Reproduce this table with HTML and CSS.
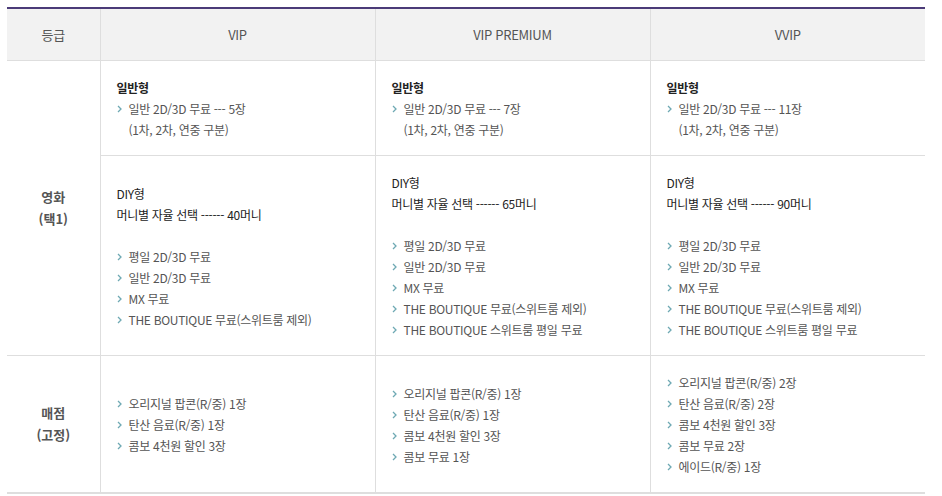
FILE: index.html
```html
<!DOCTYPE html>
<html lang="ko">
<head>
<meta charset="utf-8">
<title>등급별 혜택</title>
<link rel="stylesheet" href="styles.css">
</head>
<body>
<div class="wrap">
<table class="grade">
  <colgroup>
    <col class="c-label">
    <col class="c-tier">
    <col class="c-tier">
    <col class="c-tier">
  </colgroup>
  <thead>
    <tr>
      <th>등급</th>
      <th>VIP</th>
      <th>VIP PREMIUM</th>
      <th>VVIP</th>
    </tr>
  </thead>
  <tbody>
    <tr>
      <th class="row-label" rowspan="2">영화<br>(택1)</th>
      <td>
        <p class="sub strong">일반형</p>
        <ul class="list">
          <li><svg class="chev" viewBox="0 0 5 8"><path d="M1 1 L4 4 L1 7"/></svg><span>일반 2D/3D 무료 --- 5장<br>(1차, 2차, 연중 구분)</span></li>
        </ul>
      </td>
      <td>
        <p class="sub strong">일반형</p>
        <ul class="list">
          <li><svg class="chev" viewBox="0 0 5 8"><path d="M1 1 L4 4 L1 7"/></svg><span>일반 2D/3D 무료 --- 7장<br>(1차, 2차, 연중 구분)</span></li>
        </ul>
      </td>
      <td>
        <p class="sub strong">일반형</p>
        <ul class="list">
          <li><svg class="chev" viewBox="0 0 5 8"><path d="M1 1 L4 4 L1 7"/></svg><span>일반 2D/3D 무료 --- 11장<br>(1차, 2차, 연중 구분)</span></li>
        </ul>
      </td>
    </tr>
    <tr>
      <td>
        <p class="sub">DIY형</p>
        <p class="sub">머니별 자율 선택 ------ 40머니</p>
        <ul class="list gap">
          <li><svg class="chev" viewBox="0 0 5 8"><path d="M1 1 L4 4 L1 7"/></svg><span>평일 2D/3D 무료</span></li>
          <li><svg class="chev" viewBox="0 0 5 8"><path d="M1 1 L4 4 L1 7"/></svg><span>일반 2D/3D 무료</span></li>
          <li><svg class="chev" viewBox="0 0 5 8"><path d="M1 1 L4 4 L1 7"/></svg><span>MX 무료</span></li>
          <li><svg class="chev" viewBox="0 0 5 8"><path d="M1 1 L4 4 L1 7"/></svg><span>THE BOUTIQUE 무료(스위트룸 제외)</span></li>
        </ul>
      </td>
      <td>
        <p class="sub">DIY형</p>
        <p class="sub">머니별 자율 선택 ------ 65머니</p>
        <ul class="list gap">
          <li><svg class="chev" viewBox="0 0 5 8"><path d="M1 1 L4 4 L1 7"/></svg><span>평일 2D/3D 무료</span></li>
          <li><svg class="chev" viewBox="0 0 5 8"><path d="M1 1 L4 4 L1 7"/></svg><span>일반 2D/3D 무료</span></li>
          <li><svg class="chev" viewBox="0 0 5 8"><path d="M1 1 L4 4 L1 7"/></svg><span>MX 무료</span></li>
          <li><svg class="chev" viewBox="0 0 5 8"><path d="M1 1 L4 4 L1 7"/></svg><span>THE BOUTIQUE 무료(스위트룸 제외)</span></li>
          <li><svg class="chev" viewBox="0 0 5 8"><path d="M1 1 L4 4 L1 7"/></svg><span>THE BOUTIQUE 스위트룸 평일 무료</span></li>
        </ul>
      </td>
      <td>
        <p class="sub">DIY형</p>
        <p class="sub">머니별 자율 선택 ------ 90머니</p>
        <ul class="list gap">
          <li><svg class="chev" viewBox="0 0 5 8"><path d="M1 1 L4 4 L1 7"/></svg><span>평일 2D/3D 무료</span></li>
          <li><svg class="chev" viewBox="0 0 5 8"><path d="M1 1 L4 4 L1 7"/></svg><span>일반 2D/3D 무료</span></li>
          <li><svg class="chev" viewBox="0 0 5 8"><path d="M1 1 L4 4 L1 7"/></svg><span>MX 무료</span></li>
          <li><svg class="chev" viewBox="0 0 5 8"><path d="M1 1 L4 4 L1 7"/></svg><span>THE BOUTIQUE 무료(스위트룸 제외)</span></li>
          <li><svg class="chev" viewBox="0 0 5 8"><path d="M1 1 L4 4 L1 7"/></svg><span>THE BOUTIQUE 스위트룸 평일 무료</span></li>
        </ul>
      </td>
    </tr>
    <tr class="last">
      <th class="row-label">매점<br>(고정)</th>
      <td>
        <ul class="list">
          <li><svg class="chev" viewBox="0 0 5 8"><path d="M1 1 L4 4 L1 7"/></svg><span>오리지널 팝콘(R/중) 1장</span></li>
          <li><svg class="chev" viewBox="0 0 5 8"><path d="M1 1 L4 4 L1 7"/></svg><span>탄산 음료(R/중) 1장</span></li>
          <li><svg class="chev" viewBox="0 0 5 8"><path d="M1 1 L4 4 L1 7"/></svg><span>콤보 4천원 할인 3장</span></li>
        </ul>
      </td>
      <td>
        <ul class="list">
          <li><svg class="chev" viewBox="0 0 5 8"><path d="M1 1 L4 4 L1 7"/></svg><span>오리지널 팝콘(R/중) 1장</span></li>
          <li><svg class="chev" viewBox="0 0 5 8"><path d="M1 1 L4 4 L1 7"/></svg><span>탄산 음료(R/중) 1장</span></li>
          <li><svg class="chev" viewBox="0 0 5 8"><path d="M1 1 L4 4 L1 7"/></svg><span>콤보 4천원 할인 3장</span></li>
          <li><svg class="chev" viewBox="0 0 5 8"><path d="M1 1 L4 4 L1 7"/></svg><span>콤보 무료 1장</span></li>
        </ul>
      </td>
      <td>
        <ul class="list">
          <li><svg class="chev" viewBox="0 0 5 8"><path d="M1 1 L4 4 L1 7"/></svg><span>오리지널 팝콘(R/중) 2장</span></li>
          <li><svg class="chev" viewBox="0 0 5 8"><path d="M1 1 L4 4 L1 7"/></svg><span>탄산 음료(R/중) 2장</span></li>
          <li><svg class="chev" viewBox="0 0 5 8"><path d="M1 1 L4 4 L1 7"/></svg><span>콤보 4천원 할인 3장</span></li>
          <li><svg class="chev" viewBox="0 0 5 8"><path d="M1 1 L4 4 L1 7"/></svg><span>콤보 무료 2장</span></li>
          <li><svg class="chev" viewBox="0 0 5 8"><path d="M1 1 L4 4 L1 7"/></svg><span>에이드(R/중) 1장</span></li>
        </ul>
      </td>
    </tr>
  </tbody>
</table>
</div>
</body>
</html>
```

FILE: styles.css
```css
html, body {
  margin: 0;
  padding: 0;
  background: #fff;
}

body {
  font-family: "Noto Sans CJK KR", "Noto Sans", sans-serif;
  font-size: 12px;
  color: #555;
}

.wrap {
  padding: 7px 0 0 7px;
}

.grade {
  width: 918px;
  border-collapse: collapse;
  table-layout: fixed;
  border-top: 2px solid #4b3b78;
  border-bottom: 2px solid #dedede;
}

.c-label { width: 93px; }
.c-tier { width: 275px; }

.grade thead th {
  height: 51px;
  padding: 0;
  background: #f2f2f2;
  font-size: 13px;
  font-weight: normal;
  color: #555;
  text-align: center;
  vertical-align: middle;
  border-bottom: 1px solid #dedede;
  border-left: 1px solid #dedede;
  letter-spacing: -0.3px;
}

.grade thead th:first-child { border-left: 0; }

.grade tbody td,
.grade tbody th {
  border-left: 1px solid #dedede;
  border-bottom: 1px solid #dedede;
  vertical-align: middle;
  line-height: 21px;
}

.grade tbody td {
  padding: 16px 16px 15px;
  text-align: left;
}

.grade tbody th.row-label {
  border-left: 0;
  padding: 0;
  text-align: center;
  font-size: 13px;
  font-weight: bold;
  color: #555;
  line-height: 22px;
}

.grade tbody tr.last td,
.grade tbody tr.last th {
  border-bottom: 0;
}

.sub {
  margin: 0;
  color: #222;
  letter-spacing: -0.3px;
}

.sub.strong {
  font-weight: bold;
}

.list {
  margin: 0;
  padding: 0;
  list-style: none;
}

.list.gap {
  margin-top: 21px;
}

.list li {
  display: flex;
  align-items: flex-start;
  gap: 7px;
  letter-spacing: -0.3px;
}

.chev {
  flex: none;
  width: 5px;
  height: 8px;
  margin-top: 7px;
  fill: none;
  stroke: #6ea9b3;
  stroke-width: 1.3;
}
```
